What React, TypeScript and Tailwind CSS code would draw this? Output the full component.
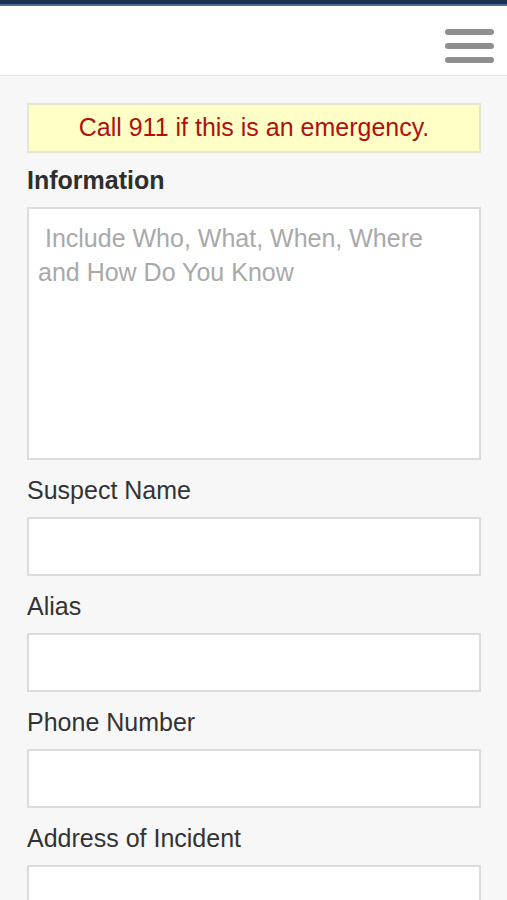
import React from 'react';

const fields = ['Suspect Name', 'Alias', 'Phone Number', 'Address of Incident'];

export default function App() {
  return (
    <div className="min-h-[900px] bg-[#f7f7f7] font-['Liberation_Sans',Arial,sans-serif]">
      {/* Top strip */}
      <div className="h-[4px] bg-[#1d3150]" />
      <div className="h-[2px] bg-[#4a6b96]" />

      {/* Header */}
      <header className="flex h-[70px] items-start justify-end border-b border-[#e8e8e8] bg-white pr-[13px] pt-[18px]">
        <button type="button" className="flex w-[49px] flex-col gap-[8px] pt-[5px]">
          <span className="block h-[6px] rounded-full bg-[#8f8f8f]" />
          <span className="block h-[6px] rounded-full bg-[#8f8f8f]" />
          <span className="block h-[6px] rounded-full bg-[#8f8f8f]" />
        </button>
      </header>

      <main className="pl-[27px] pr-[26px] pt-[27px]">
        {/* Emergency notice */}
        <div className="flex h-[50px] items-center justify-center border-2 border-[#e6e6d0] bg-[#ffffc6] text-[25px] text-[#b0100f]">
          Call 911 if this is an emergency.
        </div>

        <label className="mt-[12px] block text-[25px] font-bold leading-[30px] text-[#2e2e2e]">
          Information
        </label>
        <textarea
          placeholder=" Include Who, What, When, Where and How Do You Know"
          className="mt-[12px] block h-[253px] w-full resize-none border-2 border-[#dcdcdc] bg-white pl-[9px] pr-[24px] py-[12px] text-[25px] leading-[34px] text-[#333] placeholder:text-[#a9a9a9] focus:outline-none"
        />

        {fields.map((f) => (
          <div key={f}>
            <label className="mt-[15px] block text-[25px] leading-[30px] text-[#333]">{f}</label>
            <input
              type="text"
              className="mt-[12px] block h-[59px] w-full border-2 border-[#dcdcdc] bg-white px-[10px] text-[25px] text-[#333] focus:outline-none"
            />
          </div>
        ))}
      </main>
    </div>
  );
}
